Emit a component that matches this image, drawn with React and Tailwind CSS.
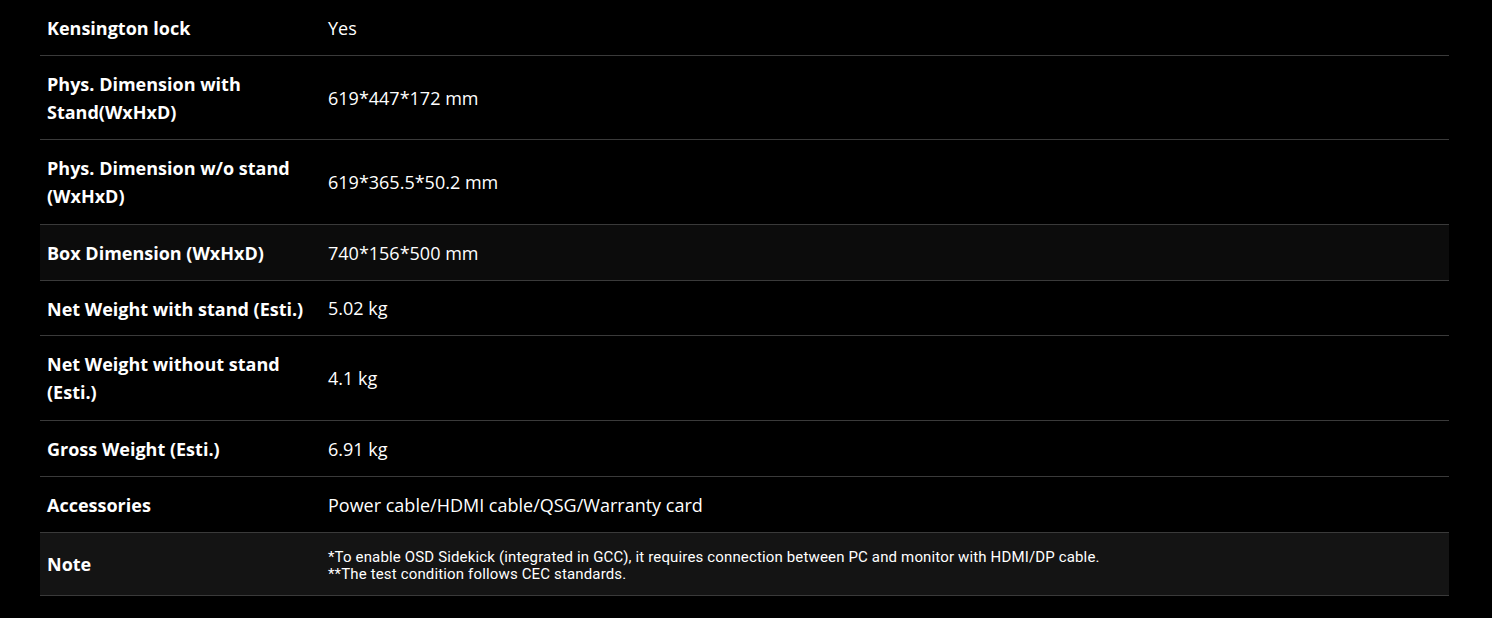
const rows = [
  { label: "Kensington lock", value: "Yes" },
  { label: "Phys. Dimension with Stand(WxHxD)", value: "619*447*172 mm" },
  { label: "Phys. Dimension w/o stand (WxHxD)", value: "619*365.5*50.2 mm", pb: "pb-[14px]" },
  { label: "Box Dimension (WxHxD)", value: "740*156*500 mm", shade: true },
  { label: "Net Weight with stand (Esti.)", value: "5.02 kg", pb: "pb-[12px]" },
  { label: "Net Weight without stand (Esti.)", value: "4.1 kg", pb: "pb-[14px]" },
  { label: "Gross Weight (Esti.)", value: "6.91 kg" },
  { label: "Accessories", value: "Power cable/HDMI cable/QSG/Warranty card" },
];

export default function App() {
  return (
    <div className="bg-black min-h-screen w-full pl-[40px] pr-[43px] font-['Open_Sans',sans-serif] text-white">
      {rows.map((r) => (
        <div
          key={r.label}
          className={`grid grid-cols-[288px_1fr] items-center border-b border-[#3a3a3a] ${
            r.shade ? "bg-[#0c0c0c]" : ""
          }`}
        >
          <div
            className={`pl-[7px] pr-2 pt-[14px] text-[18px] leading-[28px] font-bold max-w-[282px] ${
              r.pb || "pb-[13px]"
            }`}
          >
            {r.label}
          </div>
          <div className="text-[18px] leading-[28px]">{r.value}</div>
        </div>
      ))}
      <div className="grid grid-cols-[288px_1fr] items-center border-b border-[#3a3a3a] bg-[#141414]">
        <div className="pl-[7px] py-[14px] text-[18px] leading-[28px] font-bold">Note</div>
        <div className="pt-[16px] pb-[12px] text-[15px] leading-[17px] font-['Roboto',sans-serif] tracking-[0.15px]">
          <div>*To enable OSD Sidekick (integrated in GCC), it requires connection between PC and monitor with HDMI/DP cable.</div>
          <div>**The test condition follows CEC standards.</div>
        </div>
      </div>
    </div>
  );
}
